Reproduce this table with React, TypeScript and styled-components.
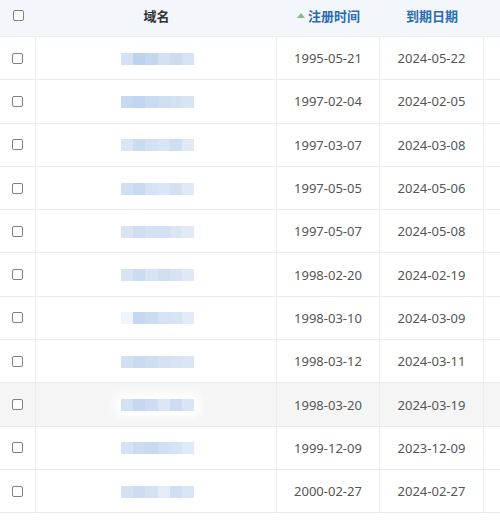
import React from "react";
import styled, { createGlobalStyle } from "styled-components";

const Global = createGlobalStyle`
  html, body { margin: 0; padding: 0; background: #fff; }
  body { font-family: "Noto Sans", "Noto Sans CJK SC", sans-serif; }
`;

const Table = styled.div`
  width: 500px;
  display: grid;
  grid-template-columns: 36px 241px 103px 104px 1fr;
`;

const HeadCell = styled.div<{ $active?: boolean }>`
  height: 37px;
  box-sizing: border-box;
  background: #f3f6fa;
  border-bottom: 1px solid #e9edf2;
  display: flex;
  align-items: center;
  justify-content: center;
  font-family: "Noto Sans CJK SC", sans-serif;
  font-size: 13px;
  font-weight: 700;
  color: ${(p) => (p.$active ? "#2a6cb3" : "#333")};
  padding-bottom: 6px;
`;

const Cell = styled.div<{ $hover?: boolean; $last?: boolean }>`
  height: 43.3px;
  box-sizing: border-box;
  background: ${(p) => (p.$hover ? "#f5f5f5" : "#fff")};
  border-bottom: 1px solid #ebebeb;
  border-right: ${(p) => (p.$last ? "none" : "1px solid #ededed")};
  display: flex;
  align-items: center;
  justify-content: center;
  font-size: 13px;
  color: #555;
`;

const Check = styled.span`
  width: 11px;
  height: 11px;
  box-sizing: border-box;
  border: 1px solid #808080;
  border-radius: 2px;
  background: #fff;
  display: inline-block;
`;

const Sort = styled.span`
  width: 0;
  height: 0;
  border-left: 4px solid transparent;
  border-right: 4px solid transparent;
  border-bottom: 5px solid #8fb38f;
  margin-right: 3px;
  margin-top: 1px;
`;

const Blur = styled.div`
  display: flex;
  height: 12px;
  width: 73px;
  margin-left: 3px;
  margin-top: 1px;
  box-shadow: 0 0 8px 6px rgba(255, 255, 255, 0.9);
`;

const Seg = styled.span`
  flex: 1;
  height: 100%;
`;

const patterns = [
  ["#d4e2f3", "#bcd2ef", "#c3d7f0", "#d3e1f3", "#cddcf2", "#d6e3f4"],
  ["#c6d9f0", "#c0d5ef", "#c9dbf1", "#cfdff2", "#d2e1f3", "#d7e4f4"],
  ["#dbe6f4", "#cadcf1", "#d3e1f3", "#d8e5f4", "#cfdff2", "#e0eaf6"],
  ["#d0dff2", "#c8daf1", "#d5e3f4", "#dae6f5", "#d3e1f3", "#e0eaf6"],
  ["#d9e5f5", "#cfdef2", "#d5e2f3", "#d2e1f3", "#dbe6f5", "#e1eaf6"],
  ["#d8e4f4", "#cbdcf1", "#d7e4f4", "#cfdff2", "#d6e3f4", "#dfe9f6"],
  ["#f0f5fb", "#c6d8f0", "#cbdcf1", "#d6e3f4", "#d7e4f4", "#e2ebf7"],
  ["#d2e0f3", "#c9daf1", "#cfdff2", "#d5e2f3", "#d8e4f4", "#dbe6f5"],
  ["#d4e1f3", "#c5d8f0", "#cddcf2", "#dce7f5", "#cbdcf1", "#d9e5f4"],
  ["#d5e2f3", "#cbdcf1", "#c8daf1", "#d0dff2", "#d6e3f4", "#e0e9f6"],
  ["#d3e1f3", "#cddcf2", "#d3e1f3", "#e3ecf7", "#d0dff2", "#dae6f5"],
];

const rows = [
  ["1995-05-21", "2024-05-22"],
  ["1997-02-04", "2024-02-05"],
  ["1997-03-07", "2024-03-08"],
  ["1997-05-05", "2024-05-06"],
  ["1997-05-07", "2024-05-08"],
  ["1998-02-20", "2024-02-19"],
  ["1998-03-10", "2024-03-09"],
  ["1998-03-12", "2024-03-11"],
  ["1998-03-20", "2024-03-19"],
  ["1999-12-09", "2023-12-09"],
  ["2000-02-27", "2024-02-27"],
];

export default function App() {
  return (
    <>
      <Global />
      <Table>
        <HeadCell>
          <Check />
        </HeadCell>
        <HeadCell>域名</HeadCell>
        <HeadCell $active>
          <Sort />
          注册时间
        </HeadCell>
        <HeadCell $active>到期日期</HeadCell>
        <HeadCell />
        {rows.map((r, i) => {
          const hover = i === 8;
          return (
            <React.Fragment key={i}>
              <Cell $hover={hover}>
                <Check />
              </Cell>
              <Cell $hover={hover}>
                <Blur>
                  {patterns[i].map((c, j) => (
                    <Seg key={j} style={{ background: c }} />
                  ))}
                </Blur>
              </Cell>
              <Cell $hover={hover}>{r[0]}</Cell>
              <Cell $hover={hover}>{r[1]}</Cell>
              <Cell $hover={hover} $last />
            </React.Fragment>
          );
        })}
      </Table>
    </>
  );
}
